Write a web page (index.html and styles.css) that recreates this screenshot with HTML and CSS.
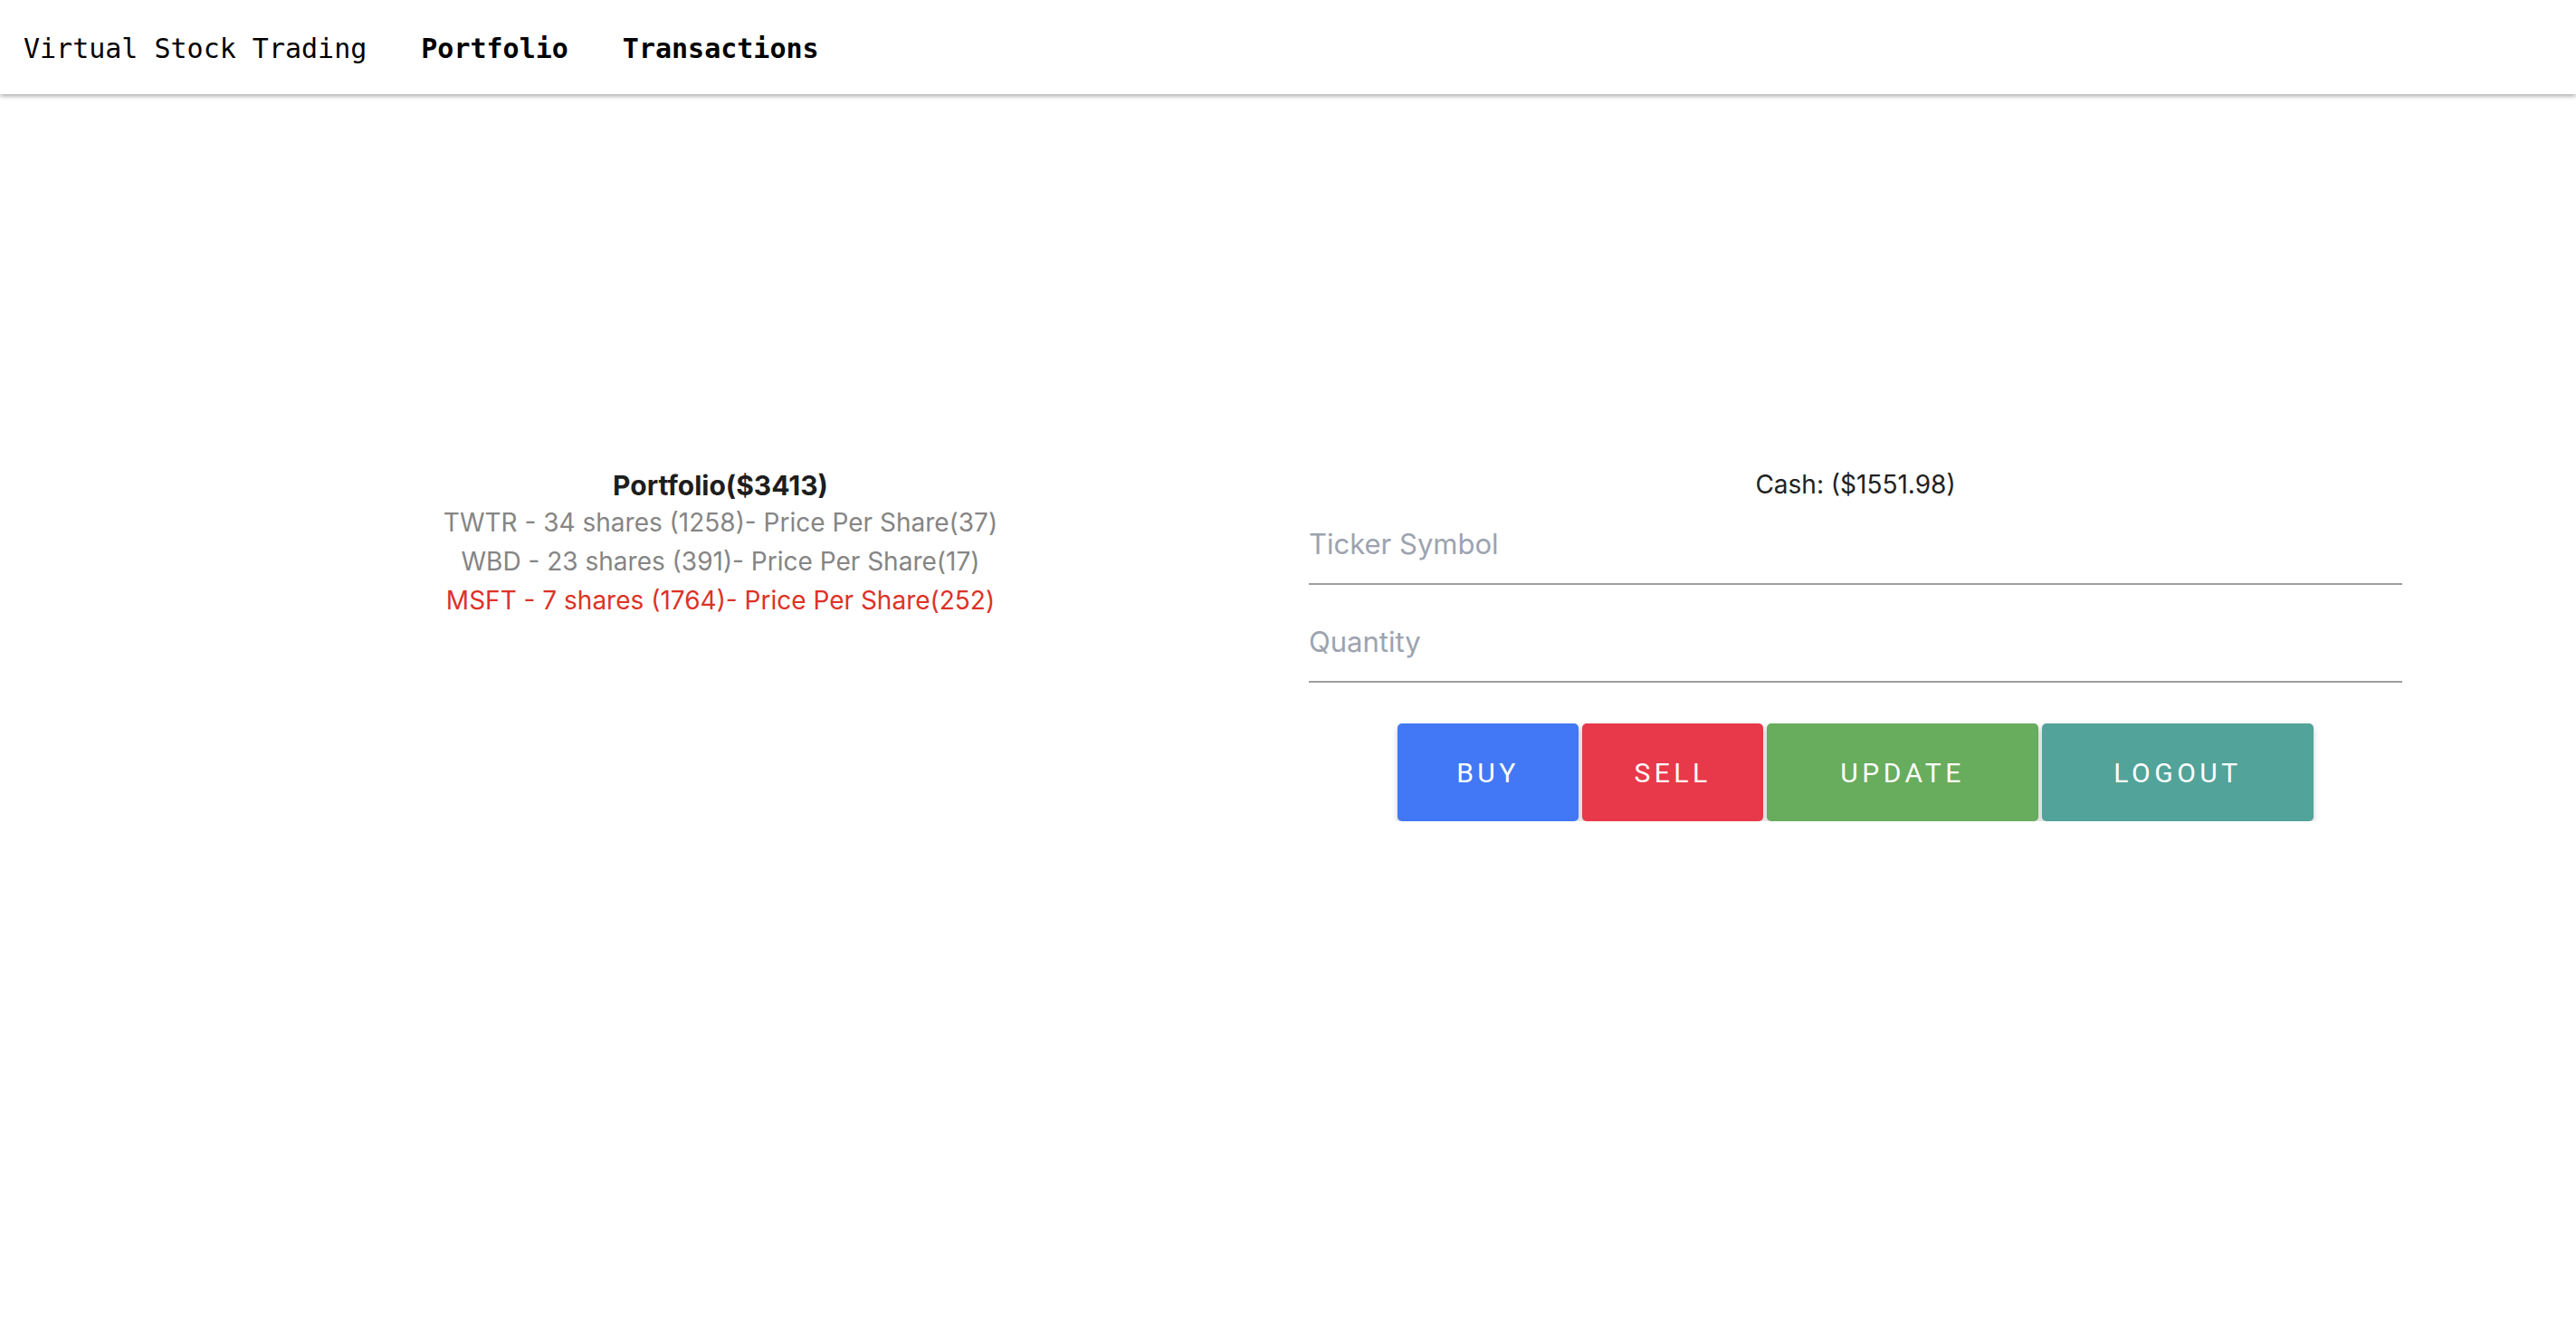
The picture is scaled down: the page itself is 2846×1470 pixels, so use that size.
FILE: index.html
```html
<!DOCTYPE html>
<html lang="en">
<head>
<meta charset="utf-8">
<title>Virtual Stock Trading</title>
<link rel="stylesheet" href="styles.css">
</head>
<body>
<nav class="navbar">
  <span class="brand">Virtual Stock Trading</span>
  <a class="nav-link" href="#">Portfolio</a>
  <a class="nav-link" href="#">Transactions</a>
</nav>
<main class="container">
  <section class="portfolio">
    <div class="portfolio-title">Portfolio($3413)</div>
    <div class="holding">TWTR - 34 shares (1258)- Price Per Share(37)</div>
    <div class="holding">WBD - 23 shares (391)- Price Per Share(17)</div>
    <div class="holding holding-down">MSFT - 7 shares (1764)- Price Per Share(252)</div>
  </section>
  <section class="trade">
    <div class="cash">Cash: ($1551.98)</div>
    <input class="field" type="text" placeholder="Ticker Symbol">
    <input class="field" type="text" placeholder="Quantity">
    <div class="actions">
      <button class="btn btn-sm btn-buy">BUY</button>
      <button class="btn btn-sm btn-sell">SELL</button>
      <button class="btn btn-lg btn-update">UPDATE</button>
      <button class="btn btn-lg btn-logout">LOGOUT</button>
    </div>
  </section>
</main>
</body>
</html>
```
FILE: styles.css
```css
* { box-sizing: border-box; }
html, body { margin: 0; padding: 0; background: #fff; }
body { font-family: Inter, "Noto Sans", sans-serif; color: #222; }

.navbar {
  height: 104px;
  display: flex;
  align-items: center;
  gap: 60px;
  padding-left: 26px;
  padding-top: 3px;
  font-family: "DejaVu Sans Mono", monospace;
  font-size: 30px;
  color: #000;
  box-shadow: 0 2px 5px rgba(0,0,0,0.35);
}
.nav-link { color: #000; text-decoration: none; font-weight: bold; }

.container {
  width: 2508px;
  margin: 0 auto;
  padding-top: 410px;
  display: grid;
  grid-template-columns: 1fr 1fr;
}

.portfolio { text-align: center; font-size: 28px; line-height: 43px; padding-top: 2px; }
.portfolio-title { font-weight: bold; font-size: 30px; color: #1e1e1e; line-height: 40px; }
.holding { color: #858585; }
.holding-down { color: #dc3328; }

.trade { padding: 0 23px; display: flex; flex-direction: column; }
.cash { text-align: center; font-size: 28px; line-height: 42px; color: #222; }

.field {
  display: block;
  width: 100%;
  height: 90px;
  padding: 0;
  border: none;
  border-bottom: 2px solid #9e9e9e;
  font-family: Inter, "Noto Sans", sans-serif;
  font-size: 31px;
  color: #222;
  background: transparent;
  outline: none;
}
.field + .field { margin-top: 18px; }
.field::placeholder { color: #9ca3af; }

.actions {
  margin-top: 45px;
  display: flex;
  justify-content: center;
  gap: 4px;
}
.btn {
  height: 108px;
  border: none;
  border-radius: 5px;
  color: #fff;
  font-family: Roboto, sans-serif;
  font-size: 30px;
  letter-spacing: 4.5px;
  padding-top: 2px;
  box-shadow: 0 3px 6px rgba(0,0,0,0.22);
}
.btn-sm { width: 200px; }
.btn-lg { width: 300px; }
.btn-buy { background: #4278f6; }
.btn-sell { background: #e8394a; }
.btn-update { background: #68ac5d; }
.btn-logout { background: #52a399; }
```
